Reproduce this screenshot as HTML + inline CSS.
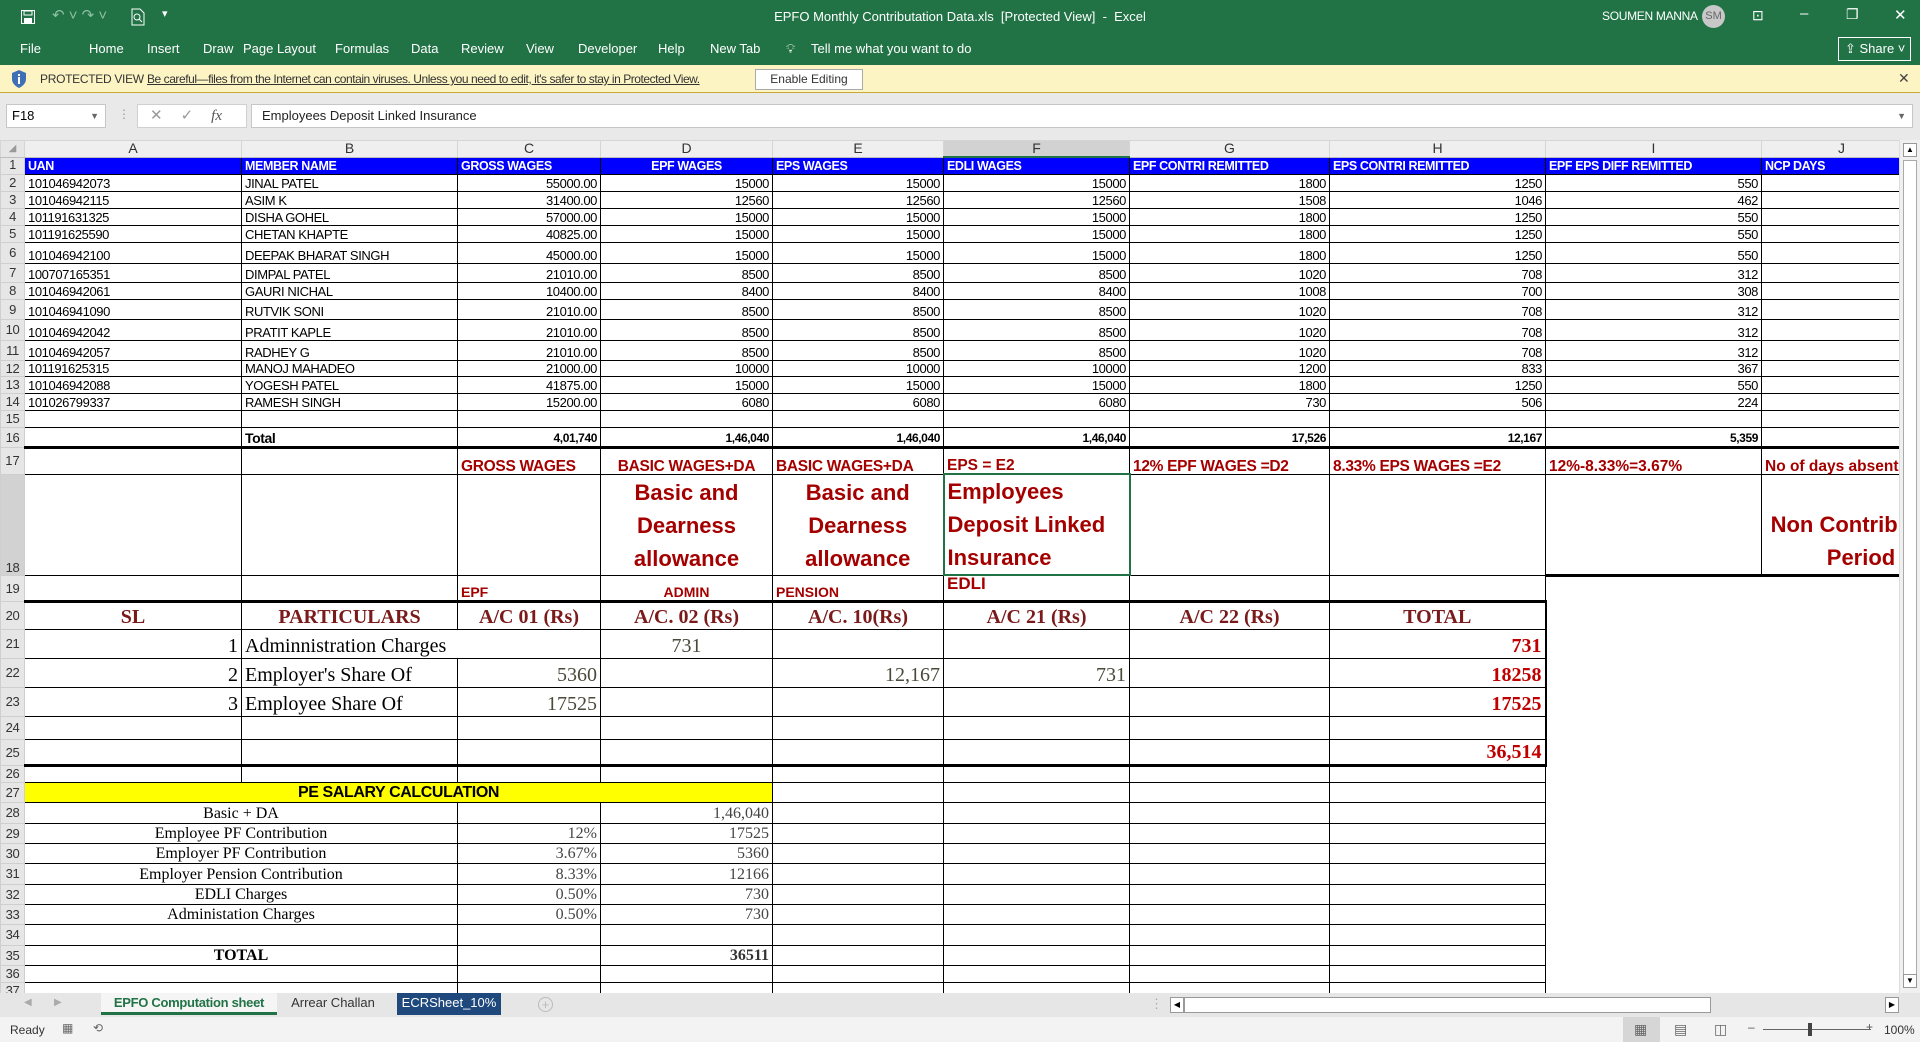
<!DOCTYPE html>
<html><head><meta charset="utf-8"><style>
*{box-sizing:border-box;margin:0;padding:0}
body{width:1920px;height:1042px;overflow:hidden;background:#fff;font-family:"Liberation Sans",Arial,sans-serif;position:relative}
.abs{position:absolute}
#title{left:0;top:0;width:1920px;height:33px;background:#217346;color:#fff}
#tabs{left:0;top:33px;width:1920px;height:32px;background:#217346;color:#fff;font-size:13px}
#tabs span{position:absolute;top:8px}
#pv{left:0;top:65px;width:1920px;height:28px;background:#fdf4c4;border-bottom:1px solid #c9a83a;font-size:12px;color:#333}
#fb{left:0;top:93px;width:1920px;height:47px;background:#e9e9e9}
#grid{left:0;top:140px;width:1899px;height:853px;overflow:hidden}
table{border-collapse:collapse;table-layout:fixed;width:1921px;font-family:"Liberation Sans Narrow","Liberation Sans",Arial,sans-serif;font-size:13px;letter-spacing:-0.4px;color:#000}
td{border:1px solid #000;white-space:nowrap;vertical-align:bottom;padding:0 3px;overflow:visible;line-height:15px}
td.rh{background:#e6e6e6;border:1px solid #cfcfcf;text-align:center;color:#333;padding:0;font-size:13px;vertical-align:middle}
tr.ch td{background:#efefef;border:1px solid #d5d5d5;border-bottom:1px solid #bdbdbd;text-align:center;color:#333;font-family:"Liberation Sans",Arial,sans-serif;font-size:14px;vertical-align:middle;letter-spacing:0}
.r{text-align:right}.c{text-align:center}
tr.h1 td{background:#0000ff;color:#fff;font-weight:bold;font-size:12.5px}
tr.h1 td.rh{background:#e6e6e6;color:#333;font-weight:normal}
.red{color:#a50000;font-weight:bold;font-family:"Liberation Sans",Arial,sans-serif;letter-spacing:0}
.big{font-size:22px;line-height:33px}
.ser{font-family:"Liberation Serif","Times New Roman",serif;font-size:20px;line-height:24px;letter-spacing:0}
.hdr{color:#7a1a1a;font-weight:bold}
.ol{color:#4a4a3a}
.tot{color:#c00000;font-weight:bold}
.nb{border:none}
</style></head><body>

<div id="title" class="abs">
 <svg class="abs" style="left:20px;top:9px" width="16" height="16" viewBox="0 0 16 16"><rect x="1.5" y="1.5" width="13" height="13" fill="none" stroke="#fff"/><rect x="4" y="2" width="8" height="4" fill="none" stroke="#fff"/><rect x="4" y="9" width="8" height="5" fill="#fff"/></svg>
 <span class="abs" style="left:52px;top:6px;font-size:15px;color:#8fbfa3">↶ ˅ ↷ ˅</span>
 <svg class="abs" style="left:130px;top:8px" width="16" height="18" viewBox="0 0 16 18"><path d="M2 1h8l4 4v12H2z" fill="none" stroke="#fff"/><circle cx="7" cy="9" r="3" fill="none" stroke="#fff"/><path d="M9 11l3 3" stroke="#fff"/></svg>
 <span class="abs" style="left:162px;top:7px;font-size:11px">▾</span>
 <div class="abs" style="left:0;width:1920px;top:9px;text-align:center;font-size:13px">EPFO Monthly Contributation Data.xls&nbsp; [Protected View]&nbsp; -&nbsp; Excel</div>
 <span class="abs" style="left:1602px;top:9px;font-size:12px;letter-spacing:-0.3px">SOUMEN MANNA</span>
 <div class="abs" style="left:1702px;top:5px;width:23px;height:23px;border-radius:50%;background:#c8c8c8;color:#666;font-size:11px;text-align:center;line-height:23px">SM</div>
 <span class="abs" style="left:1752px;top:7px;font-size:14px">⊡</span>
 <span class="abs" style="left:1800px;top:5px;font-size:15px">–</span>
 <span class="abs" style="left:1846px;top:6px;font-size:14px">❐</span>
 <span class="abs" style="left:1894px;top:6px;font-size:15px">✕</span>
</div>
<div id="tabs" class="abs">
 <span style="left:20px">File</span><span style="left:89px">Home</span><span style="left:147px">Insert</span><span style="left:203px">Draw</span><span style="left:243px">Page Layout</span><span style="left:335px">Formulas</span><span style="left:411px">Data</span><span style="left:461px">Review</span><span style="left:526px">View</span><span style="left:578px">Developer</span><span style="left:658px">Help</span><span style="left:710px">New Tab</span><span style="left:786px">💡︎</span><span style="left:811px">Tell me what you want to do</span>
 <div class="abs" style="left:1838px;top:4px;width:73px;height:24px;border:1px solid #fff;font-size:13px;line-height:22px;padding-left:6px">⇪ Share ˅</div>
</div>
<div id="pv" class="abs">
 <svg class="abs" style="left:11px;top:5px" width="16" height="18" viewBox="0 0 16 18"><path d="M8 0L15 3v6c0 4-3 7-7 9C4 16 1 13 1 9V3z" fill="#3f6fb5"/><rect x="7" y="7" width="2" height="7" fill="#fff"/><rect x="7" y="4" width="2" height="2" fill="#fff"/></svg>
 <span class="abs" style="left:40px;top:7px;letter-spacing:-0.3px">PROTECTED VIEW</span>
 <span class="abs" style="left:147px;top:7px;text-decoration:underline;letter-spacing:-0.45px">Be careful—files from the Internet can contain viruses. Unless you need to edit, it's safer to stay in Protected View.</span>
 <div class="abs" style="left:755px;top:4px;width:108px;height:21px;background:#fff;border:1px solid #aaa;text-align:center;line-height:19px">Enable Editing</div>
 <span class="abs" style="left:1898px;top:5px;font-size:14px;color:#444">✕</span>
</div>
<div id="fb" class="abs">
 <div class="abs" style="left:6px;top:11px;width:100px;height:24px;background:#fff;border:1px solid #c6c6c6;font-size:13px;line-height:22px;padding-left:5px">F18<span style="position:absolute;right:6px;font-size:9px;color:#666">▼</span></div>
 <span class="abs" style="left:118px;top:14px;color:#999;font-size:12px">⋮</span>
 <div class="abs" style="left:137px;top:11px;width:110px;height:24px;background:#fff;border:1px solid #d0d0d0;color:#999;font-size:15px;line-height:22px"><span style="margin-left:12px">✕</span><span style="margin-left:18px">✓</span><span style="margin-left:18px;font-family:'Liberation Serif',serif;font-style:italic;color:#555">fx</span></div>
 <div class="abs" style="left:251px;top:11px;width:1662px;height:24px;background:#fff;border:1px solid #c6c6c6;font-size:13px;line-height:22px;padding-left:10px;color:#222">Employees Deposit Linked Insurance<span style="position:absolute;right:6px;font-size:9px;color:#666">▼</span></div>
</div>

<div id="grid" class="abs">
<table>
<colgroup><col style="width:24px"><col style="width:217px"><col style="width:216px"><col style="width:143px"><col style="width:172px"><col style="width:171px"><col style="width:186px"><col style="width:200px"><col style="width:216px"><col style="width:216px"><col style="width:160px"></colgroup>
<tr class="ch" style="height:16px"><td class="rh" style="background:#e6e6e6;font-size:10px;color:#999">◢</td><td>A</td><td>B</td><td>C</td><td>D</td><td>E</td><td style="background:#d2d2d2;border-bottom:2px solid #217346">F</td><td>G</td><td>H</td><td>I</td><td>J</td></tr>
<tr class="h1" style="height:17px"><td class="rh">1</td><td>UAN</td><td>MEMBER NAME</td><td>GROSS WAGES</td><td class="c">EPF WAGES</td><td>EPS WAGES</td><td>EDLI WAGES</td><td>EPF CONTRI REMITTED</td><td>EPS CONTRI REMITTED</td><td>EPF EPS DIFF REMITTED</td><td>NCP DAYS</td></tr>
<tr style="height:17px"><td class="rh">2</td><td>101046942073</td><td>JINAL PATEL</td><td class="r">55000.00</td><td class="r">15000</td><td class="r">15000</td><td class="r">15000</td><td class="r">1800</td><td class="r">1250</td><td class="r">550</td><td></td></tr>
<tr style="height:17px"><td class="rh">3</td><td>101046942115</td><td>ASIM K</td><td class="r">31400.00</td><td class="r">12560</td><td class="r">12560</td><td class="r">12560</td><td class="r">1508</td><td class="r">1046</td><td class="r">462</td><td></td></tr>
<tr style="height:17px"><td class="rh">4</td><td>101191631325</td><td>DISHA GOHEL</td><td class="r">57000.00</td><td class="r">15000</td><td class="r">15000</td><td class="r">15000</td><td class="r">1800</td><td class="r">1250</td><td class="r">550</td><td></td></tr>
<tr style="height:17px"><td class="rh">5</td><td>101191625590</td><td>CHETAN KHAPTE</td><td class="r">40825.00</td><td class="r">15000</td><td class="r">15000</td><td class="r">15000</td><td class="r">1800</td><td class="r">1250</td><td class="r">550</td><td></td></tr>
<tr style="height:21px"><td class="rh">6</td><td>101046942100</td><td>DEEPAK BHARAT SINGH</td><td class="r">45000.00</td><td class="r">15000</td><td class="r">15000</td><td class="r">15000</td><td class="r">1800</td><td class="r">1250</td><td class="r">550</td><td></td></tr>
<tr style="height:19px"><td class="rh">7</td><td>100707165351</td><td>DIMPAL PATEL</td><td class="r">21010.00</td><td class="r">8500</td><td class="r">8500</td><td class="r">8500</td><td class="r">1020</td><td class="r">708</td><td class="r">312</td><td></td></tr>
<tr style="height:17px"><td class="rh">8</td><td>101046942061</td><td>GAURI NICHAL</td><td class="r">10400.00</td><td class="r">8400</td><td class="r">8400</td><td class="r">8400</td><td class="r">1008</td><td class="r">700</td><td class="r">308</td><td></td></tr>
<tr style="height:20px"><td class="rh">9</td><td>101046941090</td><td>RUTVIK SONI</td><td class="r">21010.00</td><td class="r">8500</td><td class="r">8500</td><td class="r">8500</td><td class="r">1020</td><td class="r">708</td><td class="r">312</td><td></td></tr>
<tr style="height:21px"><td class="rh">10</td><td>101046942042</td><td>PRATIT KAPLE</td><td class="r">21010.00</td><td class="r">8500</td><td class="r">8500</td><td class="r">8500</td><td class="r">1020</td><td class="r">708</td><td class="r">312</td><td></td></tr>
<tr style="height:20px"><td class="rh">11</td><td>101046942057</td><td>RADHEY G</td><td class="r">21010.00</td><td class="r">8500</td><td class="r">8500</td><td class="r">8500</td><td class="r">1020</td><td class="r">708</td><td class="r">312</td><td></td></tr>
<tr style="height:16px"><td class="rh">12</td><td>101191625315</td><td>MANOJ MAHADEO</td><td class="r">21000.00</td><td class="r">10000</td><td class="r">10000</td><td class="r">10000</td><td class="r">1200</td><td class="r">833</td><td class="r">367</td><td></td></tr>
<tr style="height:17px"><td class="rh">13</td><td>101046942088</td><td>YOGESH PATEL</td><td class="r">41875.00</td><td class="r">15000</td><td class="r">15000</td><td class="r">15000</td><td class="r">1800</td><td class="r">1250</td><td class="r">550</td><td></td></tr>
<tr style="height:17px"><td class="rh">14</td><td>101026799337</td><td>RAMESH SINGH</td><td class="r">15200.00</td><td class="r">6080</td><td class="r">6080</td><td class="r">6080</td><td class="r">730</td><td class="r">506</td><td class="r">224</td><td></td></tr>
<tr style="height:17px"><td class="rh">15</td><td></td><td></td><td></td><td></td><td></td><td></td><td></td><td></td><td></td><td></td></tr>
<tr style="height:20px;font-weight:bold;font-size:12px"><td class="rh" style="font-weight:normal">16</td><td style="border-bottom:3px solid #000"></td><td style="border-bottom:3px solid #000;font-size:14px">Total</td><td class="r" style="border-bottom:3px solid #000">4,01,740</td><td class="r" style="border-bottom:3px solid #000">1,46,040</td><td class="r" style="border-bottom:3px solid #000">1,46,040</td><td class="r" style="border-bottom:3px solid #000">1,46,040</td><td class="r" style="border-bottom:3px solid #000">17,526</td><td class="r" style="border-bottom:3px solid #000">12,167</td><td class="r" style="border-bottom:3px solid #000">5,359</td><td style="border-bottom:3px solid #000"></td></tr>
<tr style="height:27px;font-size:15.5px" class="red"><td class="rh" style="font-weight:normal">17</td><td></td><td></td><td class="red" style="letter-spacing:-0.3px">GROSS WAGES</td><td class="red c" style="letter-spacing:-0.3px">BASIC WAGES+DA</td><td class="red" style="letter-spacing:-0.3px">BASIC WAGES+DA</td><td class="red">EPS = E2</td><td class="red" style="letter-spacing:-0.3px">12% EPF WAGES =D2</td><td class="red" style="letter-spacing:-0.3px">8.33% EPS WAGES =E2</td><td class="red">12%-8.33%=3.67%</td><td class="red">No of days absent</td></tr>
<tr style="height:100px"><td class="rh" style="background:#d2d2d2;vertical-align:bottom">18</td><td></td><td></td><td></td><td class="red big c">Basic and<br>Dearness<br>allowance</td><td class="red big c">Basic and<br>Dearness<br>allowance</td><td class="red big" style="border:2px solid #217346">Employees<br>Deposit Linked<br>Insurance</td><td></td><td></td><td style="border-bottom:3px solid #000"></td><td style="border-bottom:3px solid #000;overflow:hidden;padding:0"><div class="red big c" style="width:198px">&nbsp;<br>Non Contribution<br>Period</div></td></tr>
<tr style="height:26px"><td class="rh">19</td><td style="border-bottom:3px solid #000"></td><td style="border-bottom:3px solid #000"></td><td class="red" style="font-size:14px;border-bottom:3px solid #000">EPF</td><td class="red c" style="font-size:14px;border-bottom:3px solid #000">ADMIN</td><td class="red" style="font-size:14px;border-bottom:3px solid #000">PENSION</td><td class="red" style="font-size:17px;vertical-align:top;border-bottom:3px solid #000">EDLI</td><td style="border-bottom:3px solid #000"></td><td style="border-bottom:3px solid #000"></td><td class="nb" style="border-top:3px solid #000"></td><td class="nb" style="border-top:3px solid #000"></td></tr>
<tr style="height:28px"><td class="rh">20</td><td class="ser hdr c">SL</td><td class="ser hdr c">PARTICULARS</td><td class="ser hdr c">A/C 01 (Rs)</td><td class="ser hdr c">A/C. 02 (Rs)</td><td class="ser hdr c">A/C. 10(Rs)</td><td class="ser hdr c">A/C 21 (Rs)</td><td class="ser hdr c">A/C 22 (Rs)</td><td class="ser hdr c" style="border-right:2px solid #000">TOTAL</td><td class="nb"></td><td class="nb"></td></tr>
<tr style="height:29px"><td class="rh">21</td><td class="ser r">1</td><td class="ser" style="border-right:none">Adminnistration Charges</td><td style="border-left:none"></td><td class="ser c ol">731</td><td></td><td></td><td></td><td class="ser r tot" style="border-right:2px solid #000">731</td><td class="nb"></td><td class="nb"></td></tr>
<tr style="height:29px"><td class="rh">22</td><td class="ser r">2</td><td class="ser">Employer's Share Of</td><td class="ser r ol">5360</td><td></td><td class="ser r ol">12,167</td><td class="ser r ol">731</td><td></td><td class="ser r tot" style="border-right:2px solid #000">18258</td><td class="nb"></td><td class="nb"></td></tr>
<tr style="height:29px"><td class="rh">23</td><td class="ser r">3</td><td class="ser">Employee Share Of</td><td class="ser r ol">17525</td><td></td><td></td><td></td><td></td><td class="ser r tot" style="border-right:2px solid #000">17525</td><td class="nb"></td><td class="nb"></td></tr>
<tr style="height:23px"><td class="rh">24</td><td></td><td></td><td></td><td></td><td></td><td></td><td></td><td style="border-right:2px solid #000"></td><td class="nb"></td><td class="nb"></td></tr>
<tr style="height:23px"><td class="rh">25</td><td style="border-bottom:3px solid #000"></td><td style="border-bottom:3px solid #000"></td><td style="border-bottom:3px solid #000"></td><td style="border-bottom:3px solid #000"></td><td style="border-bottom:3px solid #000"></td><td style="border-bottom:3px solid #000"></td><td style="border-bottom:3px solid #000"></td><td class="ser r tot" style="border-right:2px solid #000;border-bottom:3px solid #000">36,514</td><td class="nb"></td><td class="nb"></td></tr>
<tr style="height:17px"><td class="rh">26</td><td></td><td></td><td></td><td></td><td></td><td></td><td></td><td></td><td class="nb"></td><td class="nb"></td></tr>
<tr style="height:20px"><td class="rh">27</td><td colspan="4" class="c" style="background:#ffff00;font-weight:bold;font-size:16px;line-height:18px">PE SALARY CALCULATION</td><td></td><td></td><td></td><td></td><td class="nb"></td><td class="nb"></td></tr>
<tr style="height:21px"><td class="rh">28</td><td colspan="2" class="ser c" style="font-size:16px;line-height:19px">Basic + DA</td><td></td><td class="ser r" style="font-size:16px;line-height:19px;color:#444">1,46,040</td><td></td><td></td><td></td><td></td><td class="nb"></td><td class="nb"></td></tr>
<tr style="height:20px"><td class="rh">29</td><td colspan="2" class="ser c" style="font-size:16px;line-height:19px">Employee PF Contribution</td><td class="ser r" style="font-size:16px;line-height:19px;color:#444">12%</td><td class="ser r" style="font-size:16px;line-height:19px;color:#444">17525</td><td></td><td></td><td></td><td></td><td class="nb"></td><td class="nb"></td></tr>
<tr style="height:20px"><td class="rh">30</td><td colspan="2" class="ser c" style="font-size:16px;line-height:19px">Employer PF Contribution</td><td class="ser r" style="font-size:16px;line-height:19px;color:#444">3.67%</td><td class="ser r" style="font-size:16px;line-height:19px;color:#444">5360</td><td></td><td></td><td></td><td></td><td class="nb"></td><td class="nb"></td></tr>
<tr style="height:21px"><td class="rh">31</td><td colspan="2" class="ser c" style="font-size:16px;line-height:19px">Employer Pension Contribution</td><td class="ser r" style="font-size:16px;line-height:19px;color:#444">8.33%</td><td class="ser r" style="font-size:16px;line-height:19px;color:#444">12166</td><td></td><td></td><td></td><td></td><td class="nb"></td><td class="nb"></td></tr>
<tr style="height:20px"><td class="rh">32</td><td colspan="2" class="ser c" style="font-size:16px;line-height:19px">EDLI Charges</td><td class="ser r" style="font-size:16px;line-height:19px;color:#444">0.50%</td><td class="ser r" style="font-size:16px;line-height:19px;color:#444">730</td><td></td><td></td><td></td><td></td><td class="nb"></td><td class="nb"></td></tr>
<tr style="height:20px"><td class="rh">33</td><td colspan="2" class="ser c" style="font-size:16px;line-height:19px">Administation Charges</td><td class="ser r" style="font-size:16px;line-height:19px;color:#444">0.50%</td><td class="ser r" style="font-size:16px;line-height:19px;color:#444">730</td><td></td><td></td><td></td><td></td><td class="nb"></td><td class="nb"></td></tr>
<tr style="height:21px"><td class="rh">34</td><td colspan="2"></td><td></td><td></td><td></td><td></td><td></td><td></td><td class="nb"></td><td class="nb"></td></tr>
<tr style="height:20px"><td class="rh">35</td><td colspan="2" class="ser c" style="font-size:16px;line-height:19px;font-weight:bold">TOTAL</td><td></td><td class="ser r" style="font-size:16px;line-height:19px;font-weight:bold;color:#333">36511</td><td></td><td></td><td></td><td></td><td class="nb"></td><td class="nb"></td></tr>
<tr style="height:17px"><td class="rh">36</td><td colspan="2"></td><td></td><td></td><td></td><td></td><td></td><td></td><td class="nb"></td><td class="nb"></td></tr>
<tr style="height:16px"><td class="rh">37</td><td colspan="2"></td><td></td><td></td><td></td><td></td><td></td><td></td><td class="nb"></td><td class="nb"></td></tr>
</table>
</div>

<div class="abs" style="left:1899px;top:140px;width:21px;height:853px;background:#f0f0f0;border-left:1px solid #ddd">
 <div class="abs" style="left:3px;top:3px;width:14px;height:14px;border:1px solid #999;background:#fff;font-size:8px;text-align:center;line-height:12px">▲</div>
 <div class="abs" style="left:3px;top:20px;width:14px;height:825px;border:1px solid #aaa;background:#fff"></div>
 <div class="abs" style="left:3px;top:834px;width:14px;height:14px;border:1px solid #999;background:#fff;font-size:8px;text-align:center;line-height:12px">▼</div>
</div>

<div class="abs" style="left:0;top:993px;width:1920px;height:24px;background:#e6e6e6;font-size:13px">
 <span class="abs" style="left:24px;top:4px;color:#aaa;font-size:10px">◀</span>
 <span class="abs" style="left:54px;top:4px;color:#aaa;font-size:10px">▶</span>
 <div class="abs" style="left:101px;top:0;width:176px;height:22px;background:#f5f5f5;border-bottom:3px solid #217346;color:#217346;font-weight:bold;text-align:center;line-height:20px;letter-spacing:-0.3px">EPFO Computation sheet</div>
 <div class="abs" style="left:279px;top:0;width:108px;height:22px;color:#333;text-align:center;line-height:20px">Arrear Challan</div>
 <div class="abs" style="left:397px;top:0;width:104px;height:22px;background:#1f497d;color:#fff;text-align:center;line-height:20px">ECRSheet_10%</div>
 <div class="abs" style="left:538px;top:4px;width:15px;height:15px;border:1px solid #bbb;border-radius:50%;color:#bbb;font-size:13px;text-align:center;line-height:13px">+</div>
 <span class="abs" style="left:1150px;top:3px;color:#aaa">⋮</span>
 <div class="abs" style="left:1170px;top:4px;width:14px;height:16px;border:1px solid #999;background:#fff;font-size:8px;line-height:14px;text-align:center">◀</div>
 <div class="abs" style="left:1184px;top:4px;width:527px;height:16px;border:1px solid #999;background:#fff"></div>
 <div class="abs" style="left:1885px;top:4px;width:14px;height:16px;border:1px solid #999;background:#fff;font-size:8px;line-height:14px;text-align:center">▶</div>
</div>
<div class="abs" style="left:0;top:1017px;width:1920px;height:25px;background:#f3f3f3;font-size:12px;color:#333">
 <span class="abs" style="left:10px;top:6px">Ready</span>
 <span class="abs" style="left:62px;top:4px;color:#666">▦</span>
 <span class="abs" style="left:93px;top:4px;color:#666">⟲</span>
 <div class="abs" style="left:1623px;top:0;width:37px;height:25px;background:#d6d6d6"></div>
 <span class="abs" style="left:1634px;top:4px;color:#666;font-size:14px">▦</span>
 <span class="abs" style="left:1674px;top:4px;color:#666;font-size:14px">▤</span>
 <span class="abs" style="left:1714px;top:4px;color:#666;font-size:14px">◫</span>
 <span class="abs" style="left:1748px;top:3px;color:#555">–</span>
 <div class="abs" style="left:1763px;top:12px;width:108px;height:1px;background:#666"></div>
 <div class="abs" style="left:1808px;top:6px;width:4px;height:13px;background:#444"></div>
 <span class="abs" style="left:1866px;top:3px;color:#555">+</span>
 <span class="abs" style="left:1884px;top:6px">100%</span>
</div>
</body></html>
